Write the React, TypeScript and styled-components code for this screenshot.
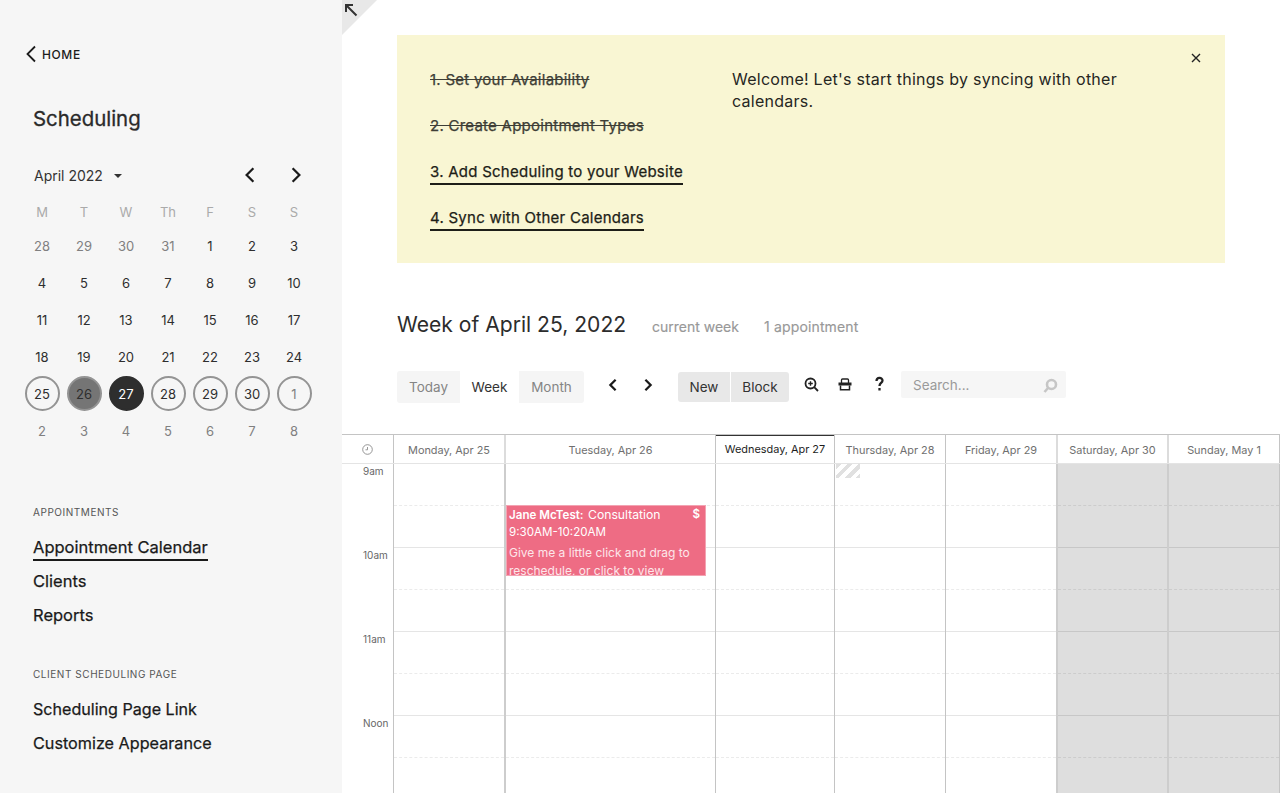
import React from "react";
import styled, { createGlobalStyle } from "styled-components";

const Global = createGlobalStyle`
  html, body { margin: 0; padding: 0; background: #fff; }
  body { font-family: Inter, "Liberation Sans", sans-serif; color: #222; -webkit-font-smoothing: antialiased; }
  * { box-sizing: border-box; }
`;

const Page = styled.div`
  display: flex;
  width: 1280px;
  height: 793px;
  overflow: hidden;
  position: relative;
`;

const Sidebar = styled.aside`
  width: 342px;
  flex: none;
  background: #f6f6f6;
  padding: 45px 0 0 21px;
  display: flex;
  flex-direction: column;
`;

const HomeLink = styled.div`
  display: flex;
  align-items: center;
  gap: 5px;
  height: 18px;
  padding-left: 4px;
  font-size: 12px;
  font-weight: 500;
  letter-spacing: 0.6px;
  color: #1c1c1c;
`;

const Title = styled.h1`
  margin: 42px 0 0 12px;
  font-size: 20.4px;
  line-height: 28px;
  font-weight: 400;
  color: #2a2a2a;
  -webkit-text-stroke: 0.3px #2a2a2a;
`;

const MonthRow = styled.div`
  display: flex;
  align-items: center;
  height: 24px;
  margin-top: 30px;
  padding-left: 13px;
  width: 294px;
`;

const MonthLabel = styled.span`
  font-size: 14px;
  color: #333;
  width: 80px;
  flex: none;
`;

const Caret = styled.span`
  width: 0;
  height: 0;
  border-left: 4px solid transparent;
  border-right: 4px solid transparent;
  border-top: 4px solid #333;
  margin-top: 2px;
`;

const MonthNav = styled.div`
  margin-left: auto;
  display: flex;
  gap: 28px;
  padding-right: 10px;
`;

const DaysGrid = styled.div`
  display: grid;
  grid-template-columns: repeat(7, 42px);
  grid-auto-rows: 37px;
  margin-top: 4px;
`;

const HeadRow = styled.div`
  display: grid;
  grid-template-columns: repeat(7, 42px);
  height: 22px;
  margin-top: 14px;
`;

const Head = styled.div`
  display: flex;
  align-items: center;
  justify-content: center;
  font-size: 13px;
  color: #aaa;
`;

const Day = styled.div<{ $kind?: string }>`
  display: flex;
  align-items: center;
  justify-content: center;
  font-size: 13px;
  color: ${(p) => (p.$kind === "muted" ? "#808080" : "#2e2e2e")};
`;

const Ring = styled.span<{ $kind?: string }>`
  width: 35px;
  height: 35px;
  border-radius: 50%;
  display: flex;
  align-items: center;
  justify-content: center;
  border: 2px solid ${(p) => (p.$kind === "today" ? "#2e2e2e" : "#949494")};
  background: ${(p) => (p.$kind === "past" ? "#757575" : p.$kind === "today" ? "#2e2e2e" : "transparent")};
  color: ${(p) => (p.$kind === "today" ? "#fff" : p.$kind === "next" ? "#808080" : "#2e2e2e")};
`;

const SectionLabel = styled.div<{ $top: number }>`
  margin: ${(p) => p.$top}px 0 0 12px;
  font-size: 10px;
  line-height: 14px;
  letter-spacing: 0.55px;
  color: #555;
`;

const NavList = styled.nav<{ $top: number }>`
  margin: ${(p) => p.$top}px 0 0 12px;
  display: flex;
  flex-direction: column;
  align-items: flex-start;
  gap: 10px;
`;

const NavItem = styled.a<{ $active?: boolean; $size?: number }>`
  font-size: ${(p) => p.$size ?? 16.5}px;
  line-height: 24px;
  font-weight: 400;
  color: #1a1a1a;
  -webkit-text-stroke: 0.25px #1a1a1a;
  box-shadow: ${(p) => (p.$active ? "0 2px 0 #1a1a1a" : "none")};
`;

const Main = styled.main`
  flex: 1;
  min-width: 0;
  display: flex;
  flex-direction: column;
  position: relative;
`;

const CornerTab = styled.div`
  position: absolute;
  left: 0;
  top: 0;
  width: 35px;
  height: 35px;
  background: #e8e8e8;
  clip-path: polygon(0 0, 100% 0, 0 100%);
`;

const CornerIcon = styled.svg`
  position: absolute;
  left: 2px;
  top: 3px;
`;

const Banner = styled.section`
  margin: 35px 55px 0;
  height: 228px;
  background: #f9f6d3;
  padding: 33px 33px;
  display: flex;
  position: relative;
`;

const Steps = styled.ol`
  list-style: none;
  margin: 0;
  padding: 0;
  width: 302px;
  flex: none;
  display: flex;
  flex-direction: column;
  align-items: flex-start;
  gap: 22px;
`;

const Step = styled.li<{ $done?: boolean }>`
  font-size: 15px;
  line-height: 24px;
  letter-spacing: 0.25px;
  color: ${(p) => (p.$done ? "#3e3e36" : "#1e1e18")};
  -webkit-text-stroke: 0.25px currentColor;
  text-decoration: ${(p) => (p.$done ? "line-through" : "none")};
  box-shadow: ${(p) => (p.$done ? "none" : "0 1px 0 #1e1e18, inset 0 -1px 0 #1e1e18")};
`;

const Welcome = styled.p`
  margin: 0;
  font-size: 16px;
  line-height: 22px;
  letter-spacing: 0.25px;
  color: #26261f;
  width: 420px;
`;

const CloseButton = styled.div`
  position: absolute;
  right: 24px;
  top: 18px;
  display: flex;
`;

const WeekHeader = styled.div`
  display: flex;
  align-items: baseline;
  margin: 49px 55px 0;
  height: 34px;
`;

const WeekTitle = styled.h2`
  margin: 0;
  font-size: 21.1px;
  font-weight: 400;
  color: #2c2c2c;
  width: 255px;
  flex: none;
  white-space: nowrap;
`;

const WeekMeta = styled.span<{ $w?: number; $ls?: number }>`
  font-size: 14px;
  color: #989898;
  -webkit-text-stroke: 0.15px #989898;
  width: ${(p) => p.$w ?? 112}px;
  letter-spacing: ${(p) => p.$ls ?? 0}px;
`;

const Toolbar = styled.div`
  display: flex;
  align-items: flex-start;
  margin: 25px 0 0 55px;
  height: 32px;
`;

const Segments = styled.div`
  display: flex;
  height: 32px;
  background: #f5f5f5;
  border-radius: 3px;
  overflow: hidden;
`;

const Segment = styled.div<{ $active?: boolean; $w: number }>`
  width: ${(p) => p.$w}px;
  display: flex;
  align-items: center;
  justify-content: center;
  font-size: 13.5px;
  background: ${(p) => (p.$active ? "#fff" : "transparent")};
  color: ${(p) => (p.$active ? "#333" : "#858585")};
`;

const ArrowPair = styled.div`
  display: flex;
  gap: 21px;
  margin: 7px 0 0 22px;
`;

const ActionGroup = styled.div`
  display: flex;
  gap: 1px;
  height: 30px;
  margin: 1px 0 0 23px;
  border-radius: 3px;
  overflow: hidden;
`;

const Action = styled.div<{ $w: number }>`
  width: ${(p) => p.$w}px;
  background: #e8e8e8;
  display: flex;
  align-items: center;
  justify-content: center;
  font-size: 13.5px;
  color: #333;
`;

const Tools = styled.div`
  display: flex;
  align-items: center;
  gap: 20px;
  height: 16px;
  margin: 5px 0 0 15px;
`;

const SearchBox = styled.div`
  width: 165px;
  height: 27px;
  margin-left: 15px;
  background: #f6f6f6;
  border-radius: 2px;
  display: flex;
  align-items: center;
  justify-content: space-between;
  padding: 0 8px 0 12px;
  font-size: 13.5px;
  color: #9a9a9a;
`;

const Schedule = styled.div`
  margin-top: 31px;
  flex: 1;
  min-height: 0;
  border-top: 1px solid #c4c4c4;
  display: flex;
  flex-direction: column;
  overflow: hidden;
`;

const columns = "52px 112px 210px 119px 111px 112px 111px 111px";

const HeaderRow = styled.div`
  display: grid;
  grid-template-columns: ${columns};
  height: 29px;
  flex: none;
  border-bottom: 1px solid #e4e4e4;
`;

const HeaderCell = styled.div<{ $today?: boolean; $soft?: boolean }>`
  display: flex;
  align-items: center;
  justify-content: center;
  font-size: 10.9px;
  padding-top: 1px;
  color: ${(p) => (p.$today ? "#1d1d1d" : "#6f6f6f")};
  border-right: ${(p) => (p.$soft ? "2px solid #dcdcdc" : "1px solid #c4c4c4")};
  box-shadow: ${(p) => (p.$today ? "inset 0 2px 0 #333" : "none")};
  margin-top: ${(p) => (p.$today ? "-1px" : "0")};
`;

const Body = styled.div`
  display: grid;
  grid-template-columns: ${columns};
  flex: 1;
  min-height: 0;
`;

const Gutter = styled.div`
  border-right: 1px solid #c4c4c4;
  display: flex;
  flex-direction: column;
`;

const HourLabel = styled.div`
  height: 84px;
  padding: 1px 0 0 21px;
  font-size: 10px;
  line-height: 13px;
  color: #666;
  flex: none;
`;

const DayColumn = styled.div<{ $weekend?: boolean; $thick?: boolean }>`
  position: relative;
  border-right: ${(p) => (p.$thick ? "2px solid #cdcdcd" : "1px solid #c4c4c4")};
  background: ${(p) => (p.$weekend ? "#dedede" : "#fff")};
  display: flex;
  flex-direction: column;
`;

const Slot = styled.div<{ $solid?: boolean }>`
  height: 42px;
  flex: none;
  border-bottom: 1px ${(p) => (p.$solid ? "solid rgba(0, 0, 0, 0.1)" : "dashed rgba(0, 0, 0, 0.08)")};
`;

const Hatch = styled.div`
  position: absolute;
  left: 1px;
  top: 0;
  width: 24px;
  height: 14px;
  background: repeating-linear-gradient(135deg, #e0e0e0 0 4px, #fff 4px 8px);
`;

const Appointment = styled.div`
  position: absolute;
  left: 0;
  top: 41px;
  width: 200px;
  height: 71px;
  background: #ee6c84;
  border: 1px solid #f3a3b2;
  color: #fff;
  padding: 0 3px 0 2px;
  font-size: 12.2px;
  line-height: 17px;
  overflow: hidden;
`;

const AppointmentHead = styled.div`
  display: flex;
  justify-content: space-between;
  padding-right: 2px;
`;

const Client = styled.strong`
  font-size: 11.6px;
  font-weight: 600;
`;

const ClientName = styled(Client)`
  margin-right: 1px;
`;

const AppointmentTime = styled.div`
  font-size: 11.6px;
`;

const AppointmentNote = styled.div`
  margin-top: 3px;
  font-size: 12px;
  line-height: 18px;
  color: #fde6ea;
`;

const Chevron = ({ dir, size = 16, w = 2 }: { dir: "l" | "r"; size?: number; w?: number }) => (
  <svg width={size} height={size} viewBox="0 0 16 16" fill="none" stroke="#1a1a1a" strokeWidth={w}>
    <path d={dir === "l" ? "M11 2 L5 8 L11 14" : "M5 2 L11 8 L5 14"} />
  </svg>
);

const headers = ["Monday, Apr 25", "Tuesday, Apr 26", "Wednesday, Apr 27", "Thursday, Apr 28", "Friday, Apr 29", "Saturday, Apr 30", "Sunday, May 1"];
const muted = ["28", "29", "30", "31"];
const weeks = [
  ["1", "2", "3"],
  ["4", "5", "6", "7", "8", "9", "10"],
  ["11", "12", "13", "14", "15", "16", "17"],
  ["18", "19", "20", "21", "22", "23", "24"],
];
const hours = ["9am", "10am", "11am", "Noon"];
const ringDays: [string, string][] = [["25", "ring"], ["26", "past"], ["27", "today"], ["28", "ring"], ["29", "ring"], ["30", "ring"], ["1", "next"]];

const Slots = () => (
  <>
    {Array.from({ length: 8 }).map((_, i) => (
      <Slot key={i} $solid={i % 2 === 1} />
    ))}
  </>
);

export default function App() {
  return (
    <Page>
      <Global />
      <Sidebar>
        <HomeLink>
          <svg width="12" height="18" viewBox="0 0 12 18" fill="none" stroke="#1c1c1c" strokeWidth="1.8">
            <path d="M10 1.5 L2.5 9 L10 16.5" />
          </svg>
          HOME
        </HomeLink>
        <Title>Scheduling</Title>
        <MonthRow>
          <MonthLabel>April 2022</MonthLabel>
          <Caret />
          <MonthNav>
            <Chevron dir="l" size={18} />
            <Chevron dir="r" size={18} />
          </MonthNav>
        </MonthRow>
        <HeadRow>
          {["M", "T", "W", "Th", "F", "S", "S"].map((d, i) => (
            <Head key={i}>{d}</Head>
          ))}
        </HeadRow>
        <DaysGrid>
          {muted.map((d) => (
            <Day key={d} $kind="muted">{d}</Day>
          ))}
          {weeks.flat().map((d) => (
            <Day key={d}>{d}</Day>
          ))}
          {ringDays.map(([d, k]) => (
            <Day key={"r" + d}>
              <Ring $kind={k}>{d}</Ring>
            </Day>
          ))}
          {["2", "3", "4", "5", "6", "7", "8"].map((d) => (
            <Day key={"n" + d} $kind="muted">{d}</Day>
          ))}
        </DaysGrid>
        <SectionLabel $top={56}>APPOINTMENTS</SectionLabel>
        <NavList $top={16}>
          <NavItem $active>Appointment Calendar</NavItem>
          <NavItem>Clients</NavItem>
          <NavItem>Reports</NavItem>
        </NavList>
        <SectionLabel $top={40}>CLIENT SCHEDULING PAGE</SectionLabel>
        <NavList $top={16}>
          <NavItem $size={16.1}>Scheduling Page Link</NavItem>
          <NavItem $size={16.2}>Customize Appearance</NavItem>
        </NavList>
      </Sidebar>
      <Main>
        <CornerTab>
          <CornerIcon width="14" height="14" viewBox="0 0 14 14" fill="none" stroke="#333" strokeWidth="2">
            <path d="M2 9 V2 H9 M2 2 L12.5 12.5" />
          </CornerIcon>
        </CornerTab>
        <Banner>
          <Steps>
            <Step $done>1. Set your Availability</Step>
            <Step $done>2. Create Appointment Types</Step>
            <Step>3. Add Scheduling to your Website</Step>
            <Step>4. Sync with Other Calendars</Step>
          </Steps>
          <Welcome>Welcome! Let's start things by syncing with other calendars.</Welcome>
          <CloseButton>
            <svg width="10" height="10" viewBox="0 0 10 10" stroke="#222" strokeWidth="1.4">
              <path d="M1 1 L9 9 M9 1 L1 9" />
            </svg>
          </CloseButton>
        </Banner>
        <WeekHeader>
          <WeekTitle>Week of April 25, 2022</WeekTitle>
          <WeekMeta>current week</WeekMeta>
          <WeekMeta $w={120} $ls={0.15}>1 appointment</WeekMeta>
        </WeekHeader>
        <Toolbar>
          <Segments>
            <Segment $w={63}>Today</Segment>
            <Segment $w={59} $active>Week</Segment>
            <Segment $w={65}>Month</Segment>
          </Segments>
          <ArrowPair>
            <Chevron dir="l" size={14} w={2.6} />
            <Chevron dir="r" size={14} w={2.6} />
          </ArrowPair>
          <ActionGroup>
            <Action $w={52}>New</Action>
            <Action $w={58}>Block</Action>
          </ActionGroup>
          <Tools>
            <svg width="15" height="15" viewBox="0 0 15 15" fill="none" stroke="#222" strokeWidth="1.8">
              <circle cx="6.5" cy="6.5" r="5" />
              <path d="M10.2 10.2 L14 14" />
              <path d="M6.5 4.2 V8.8 M4.2 6.5 H8.8" strokeWidth="1.4" />
            </svg>
            <svg width="14" height="13" viewBox="0 0 14 13" fill="none" stroke="#222" strokeWidth="1.3" style={{ marginLeft: -1 }}>
              <path d="M3.5 5 V2 Q3.5 1 4.5 1 H9.5 Q10.5 1 10.5 2 V5" />
              <rect x="0.5" y="4.5" width="13" height="3" fill="#222" stroke="none" />
              <path d="M2.5 7.5 V11.8 H11.5 V7.5" strokeWidth="1.5" />
            </svg>
            <svg width="13" height="16" viewBox="0 0 13 16" fill="none" stroke="#222" strokeWidth="2.3" style={{ marginLeft: 1 }}>
              <path d="M3.5 5 C3.5 1 9.5 1 9.5 4.5 C9.5 7 6.5 7 6.5 10" />
              <path d="M6.5 12 V14.5" />
            </svg>
          </Tools>
          <SearchBox>
            Search...
            <svg width="16" height="16" viewBox="0 0 16 16" fill="none" stroke="#c6c6c6" strokeWidth="2.6" style={{ marginTop: 3 }}>
              <circle cx="9.5" cy="6.5" r="4.5" />
              <path d="M6 10 L2.5 14" />
            </svg>
          </SearchBox>
        </Toolbar>
        <Schedule>
          <HeaderRow>
            <HeaderCell>
              <svg width="11" height="11" viewBox="0 0 11 11" fill="none" stroke="#8a8a8a" strokeWidth="0.9">
                <circle cx="5.5" cy="5.5" r="4.8" />
                <path d="M5.5 3 V5.8 H3.5" />
              </svg>
            </HeaderCell>
            {headers.map((h, i) => (
              <HeaderCell key={h} $today={i === 2} $soft={i === 0 || i === 4 || i === 5}>{h}</HeaderCell>
            ))}
          </HeaderRow>
          <Body>
            <Gutter>
              {hours.map((h) => (
                <HourLabel key={h}>{h}</HourLabel>
              ))}
            </Gutter>
            <DayColumn $thick><Slots /></DayColumn>
            <DayColumn>
              <Slots />
              <Appointment>
                <AppointmentHead>
                  <span><ClientName>Jane McTest:</ClientName> Consultation</span>
                  <Client as="span">$</Client>
                </AppointmentHead>
                <AppointmentTime>9:30AM-10:20AM</AppointmentTime>
                <AppointmentNote>Give me a little click and drag to reschedule, or click to view</AppointmentNote>
              </Appointment>
            </DayColumn>
            <DayColumn><Slots /></DayColumn>
            <DayColumn>
              <Slots />
              <Hatch />
            </DayColumn>
            <DayColumn $thick><Slots /></DayColumn>
            <DayColumn $weekend $thick><Slots /></DayColumn>
            <DayColumn $weekend><Slots /></DayColumn>
          </Body>
        </Schedule>
      </Main>
    </Page>
  );
}
